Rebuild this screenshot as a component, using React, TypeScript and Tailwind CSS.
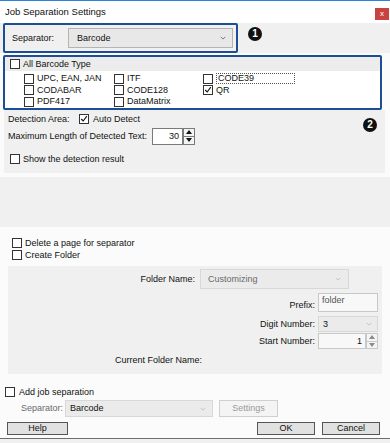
import React from "react";

const font = { fontFamily: '"Liberation Sans", Arial, sans-serif' };

function Check({ checked = false }: { checked?: boolean }) {
  return (
    <span className="relative inline-flex w-[10px] h-[10px] shrink-0 border border-[#333333] bg-white">
      {checked && (
        <svg viewBox="0 0 10 10" className="absolute left-0 top-0 w-[8px] h-[8px]">
          <path d="M1.5 5 L4 7.5 L8.5 1.5" fill="none" stroke="#111" strokeWidth="1.4" />
        </svg>
      )}
    </span>
  );
}

function Chevron({ light = false }: { light?: boolean }) {
  return (
    <svg viewBox="0 0 8 5" className="w-[6px] h-[4px]">
      <path d="M1 1 L4 4 L7 1" fill="none" stroke={light ? "#b5b5b5" : "#555"} strokeWidth="1" />
    </svg>
  );
}

function Badge({ n }: { n: string }) {
  return (
    <span className="w-[14px] h-[14px] rounded-full bg-[#111] text-white text-[10px] font-bold leading-none flex items-center justify-center">
      {n}
    </span>
  );
}

function Spinner({ light = false }: { light?: boolean }) {
  const c = light ? "#8a8a8a" : "#111";
  return (
    <div className={`flex flex-col w-[12px] border ${light ? "border-[#c8c8c8]" : "border-[#7a7a7a]"} bg-[#f4f4f4]`}>
      <div className={`flex-1 flex items-center justify-center border-b ${light ? "border-[#c8c8c8]" : "border-[#7a7a7a]"}`}>
        <svg viewBox="0 0 6 4" className="w-[6px] h-[4px]">
          <path d="M0 4 L3 0 L6 4 Z" fill={c} />
        </svg>
      </div>
      <div className="flex-1 flex items-center justify-center">
        <svg viewBox="0 0 6 4" className="w-[6px] h-[4px]">
          <path d="M0 0 L3 4 L6 0 Z" fill={c} />
        </svg>
      </div>
    </div>
  );
}

function Btn({ label, w, disabled = false }: { label: string; w: string; disabled?: boolean }) {
  return (
    <div
      className={`${w} flex items-center justify-center leading-none border ${
        disabled ? "border-[#cfcfcf] bg-[#f4f4f4] text-[#9a9a9a] h-[17px]" : "border-[#555] bg-[#e1e1e1] text-[#111] h-[13px]"
      }`}
    >
      {label}
    </div>
  );
}

const barcodes = [
  ["UPC, EAN, JAN", "ITF", "CODE39"],
  ["CODABAR", "CODE128", "QR"],
  ["PDF417", "DataMatrix", ""],
];

export default function App() {
  return (
    <div
      className="w-[390px] h-[443px] overflow-hidden bg-[#fbfbfb] text-[#111] text-[9px] leading-none whitespace-nowrap flex flex-col"
      style={font}
    >
      {/* title bar */}
      <div className="h-[23px] shrink-0 border-t border-[#2f80d8] bg-white flex items-center justify-between pl-[5px] pr-[1px]">
        <span className="text-[9.5px]">Job Separation Settings</span>
        <span className="w-[14px] h-[12px] bg-[#c94242] text-white text-[8px] flex items-center justify-center mt-[3px]">x</span>
      </div>

      {/* separator selector */}
      <div className="h-[30px] shrink-0 bg-[#f0f0f0] flex items-start pl-[3px]">
        <div className="w-[235px] h-[30px] border-2 border-[#1c4e96] rounded-[2px] flex items-center pl-[7px] pr-[3px]">
          <span className="w-[56px]">Separator:</span>
          <div className="flex-1 h-[20px] border border-[#b4b4b4] bg-[#e8e8e8] flex items-center justify-between pl-[8px] pr-[6px]">
            <span>Barcode</span>
            <Chevron />
          </div>
        </div>
        <div className="ml-[10px] mt-[4px]">
          <Badge n="1" />
        </div>
      </div>

      {/* barcode types */}
      <div className="h-[2px] shrink-0" />
      <div className="ml-[3px] w-[379px] h-[55px] shrink-0 border-2 border-[#1c4e96] rounded-[2px] bg-white flex flex-col">
        <div className="h-[14px] bg-[#ececec] flex items-center gap-[3px] pl-[5px]">
          <Check />
          <span>All Barcode Type</span>
        </div>
        <div className="flex flex-col pt-[2px]">
          {barcodes.map((row, i) => (
            <div key={i} className="h-[11.5px] flex items-center">
              {row.map((name, j) =>
                name ? (
                  <div
                    key={j}
                    className={`flex items-center gap-[3px] ${j === 0 ? "ml-[19px] w-[90px]" : j === 1 ? "w-[89px]" : ""}`}
                  >
                    <Check checked={name === "QR"} />
                    <span
                      className={
                        name === "CODE39"
                          ? "border border-dotted border-[#555] w-[79px] h-[11px] flex items-center pl-[1px]"
                          : ""
                      }
                    >
                      {name}
                    </span>
                  </div>
                ) : null
              )}
            </div>
          ))}
        </div>
      </div>

      {/* detection */}
      <div className="ml-[4px] mr-[5px] h-[63px] shrink-0 bg-[#f0f0f0] relative flex flex-col pl-[4px]">
        <div className="h-[17px] flex items-center pt-[1px]">
          <span className="w-[71px]">Detection Area:</span>
          <Check checked />
          <span className="ml-[4px]">Auto Detect</span>
        </div>
        <div className="h-[18px] flex items-center">
          <span className="w-[144px]">Maximum Length of Detected Text:</span>
          <div className="w-[31px] h-[17px] border border-[#7a7a7a] bg-white flex items-center justify-end pr-[3px]">30</div>
          <div className="h-[17px] flex">
            <Spinner />
          </div>
        </div>
        <div className="h-[19px] flex items-end gap-[3px] pl-[2px]">
          <Check />
          <span>Show the detection result</span>
        </div>
        <div className="absolute right-[8px] top-[8px]">
          <Badge n="2" />
        </div>
      </div>

      <div className="h-[4px] shrink-0" />
      <div className="h-[50px] shrink-0 bg-[#f0f0f0]" />

      {/* folder options */}
      <div className="pt-[11px] pl-[12px] flex flex-col gap-[2px]">
        <div className="h-[10px] flex items-center gap-[3px]">
          <Check />
          <span>Delete a page for separator</span>
        </div>
        <div className="h-[10px] flex items-center gap-[3px]">
          <Check />
          <span>Create Folder</span>
        </div>
      </div>
      <div className="mt-[6px] ml-[8px] w-[374px] h-[108px] shrink-0 bg-[#f0f0f0] flex flex-col pt-[3px]">
        <div className="h-[20px] flex items-center">
          <span className="w-[187px] text-right">Folder Name:</span>
          <div className="ml-[5px] w-[149px] h-[20px] border border-[#d8d8d8] bg-[#ebebeb] flex items-center justify-between pl-[7px] pr-[7px] text-[#6a6a6a]">
            <span>Customizing</span>
            <Chevron light />
          </div>
        </div>
        <div className="mt-[4px] h-[19px] flex">
          <span className="w-[307px] text-right pt-[8px]">Prefix:</span>
          <div className="ml-[3px] w-[60px] h-[19px] border border-[#c8c8c8] bg-[#f8f8f8] pl-[3px] pt-[2px] text-[#555]">folder</div>
        </div>
        <div className="mt-[4px] h-[16px] flex items-center">
          <span className="w-[307px] text-right">Digit Number:</span>
          <div className="ml-[3px] w-[60px] h-[16px] border border-[#d8d8d8] bg-[#ebebeb] flex items-center justify-between pl-[4px] pr-[5px]">
            <span>3</span>
            <Chevron light />
          </div>
        </div>
        <div className="mt-[1px] h-[16px] flex items-center">
          <span className="w-[307px] text-right">Start Number:</span>
          <div className="ml-[3px] w-[48px] h-[16px] border border-[#c8c8c8] bg-[#f8f8f8] flex items-center justify-end pr-[3px]">1</div>
          <div className="h-[16px] flex">
            <Spinner light />
          </div>
        </div>
        <div className="mt-[6px] h-[10px] flex items-center pl-[107px]">Current Folder Name:</div>
      </div>

      {/* job separation */}
      <div className="mt-[13px] h-[10px] flex items-center gap-[4px] pl-[5px]">
        <Check />
        <span>Add job separation</span>
      </div>
      <div className="mt-[3px] h-[17px] flex items-center pl-[21px]">
        <span className="w-[44px] text-[#6a6a6a]">Separator:</span>
        <div className="w-[148px] h-[17px] border border-[#d8d8d8] bg-[#ebebeb] flex items-center justify-between pl-[4px] pr-[6px]">
          <span>Barcode</span>
          <Chevron light />
        </div>
        <div className="ml-[6px]">
          <Btn label="Settings" w="w-[59px]" disabled />
        </div>
      </div>
      <div className="mt-[5px] h-[13px] flex items-center px-[7px]">
        <Btn label="Help" w="w-[61px]" />
        <div className="flex-1" />
        <Btn label="OK" w="w-[58px]" />
        <div className="w-[7px]" />
        <Btn label="Cancel" w="w-[58px]" />
        <div className="w-[3px]" />
      </div>
      <div className="mt-[3px] h-[1px] shrink-0 bg-[#6d6d6d]" />
      <div className="flex-1 bg-[#f0f0f0]" />
    </div>
  );
}
